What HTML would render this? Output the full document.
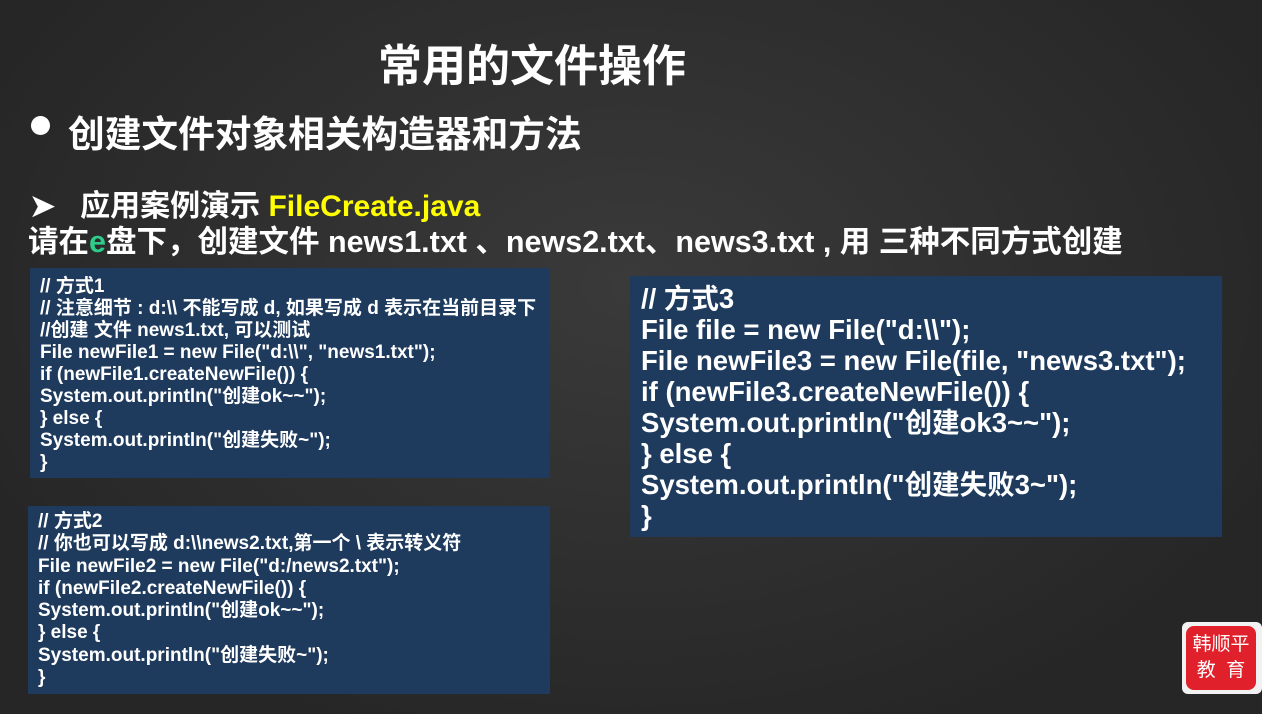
<html><head><style>
body{margin:0;width:1262px;height:714px;background:radial-gradient(ellipse at 50% 40%,#3a3a3a,#262626 80%);font-family:"Liberation Sans","Noto Sans CJK SC",sans-serif;color:#fff;position:relative;overflow:hidden;font-weight:bold}
.a{position:absolute;white-space:nowrap}
.box{position:absolute;background:#1e3b5e;}
.box div{white-space:nowrap}
</style></head><body>
<div class="a" style="left:378px;top:30px;font-size:44px">常用的文件操作</div>
<div class="a" style="left:31px;top:116px;width:19px;height:19px;border-radius:50%;background:#fff"></div>
<div class="a" style="left:68px;top:104px;font-size:36.7px">创建文件对象相关构造器和方法</div>
<div class="a" style="left:30px;top:181px;font-size:30px">➤&nbsp;&nbsp;&nbsp;应用案例演示 <span style="color:#ffff00">FileCreate.java</span></div>
<div class="a" style="left:28px;top:217px;font-size:30.5px">请在<span style="color:#2ecc8a">e</span>盘下，创建文件 news1.txt 、news2.txt、news3.txt , 用 三种不同方式创建</div>
<div class="box" style="left:30px;top:268px;width:520px;height:210px;padding:8px 10px;box-sizing:border-box;font-size:19px;line-height:22px">
<div>// 方式1</div><div>// 注意细节 : d:\\ 不能写成 d, 如果写成 d 表示在当前目录下</div><div>//创建 文件 news1.txt, 可以测试</div><div>File newFile1 = new File("d:\\", "news1.txt");</div><div>if (newFile1.createNewFile()) {</div><div>System.out.println("创建ok~~");</div><div>} else {</div><div>System.out.println("创建失败~");</div><div>}</div></div>
<div class="box" style="left:28px;top:506px;width:522px;height:188px;padding:5px 10px;box-sizing:border-box;font-size:19px;line-height:22.3px">
<div>// 方式2</div><div>// 你也可以写成 d:\\news2.txt,第一个 \ 表示转义符</div><div>File newFile2 = new File("d:/news2.txt");</div><div>if (newFile2.createNewFile()) {</div><div>System.out.println("创建ok~~");</div><div>} else {</div><div>System.out.println("创建失败~");</div><div>}</div></div>
<div class="box" style="left:630px;top:276px;width:592px;height:261px;padding:7px 11px;box-sizing:border-box;font-size:27.5px;line-height:31px">
<div>// 方式3</div><div>File file = new File("d:\\");</div><div>File newFile3 = new File(file, "news3.txt");</div><div>if (newFile3.createNewFile()) {</div><div>System.out.println("创建ok3~~");</div><div>} else {</div><div>System.out.println("创建失败3~");</div><div>}</div></div>
<div class="a" style="left:1182px;top:622px;width:80px;height:72px;background:#f2f2f2;border-radius:6px"></div>
<div class="a" style="left:1186px;top:626px;width:70px;height:64px;background:#e0202a;border-radius:8px;font-size:19px;line-height:26px;text-align:center;padding-top:6px;box-sizing:border-box;font-weight:normal">韩顺平<br>教&nbsp;&nbsp;育</div>
</body></html>
